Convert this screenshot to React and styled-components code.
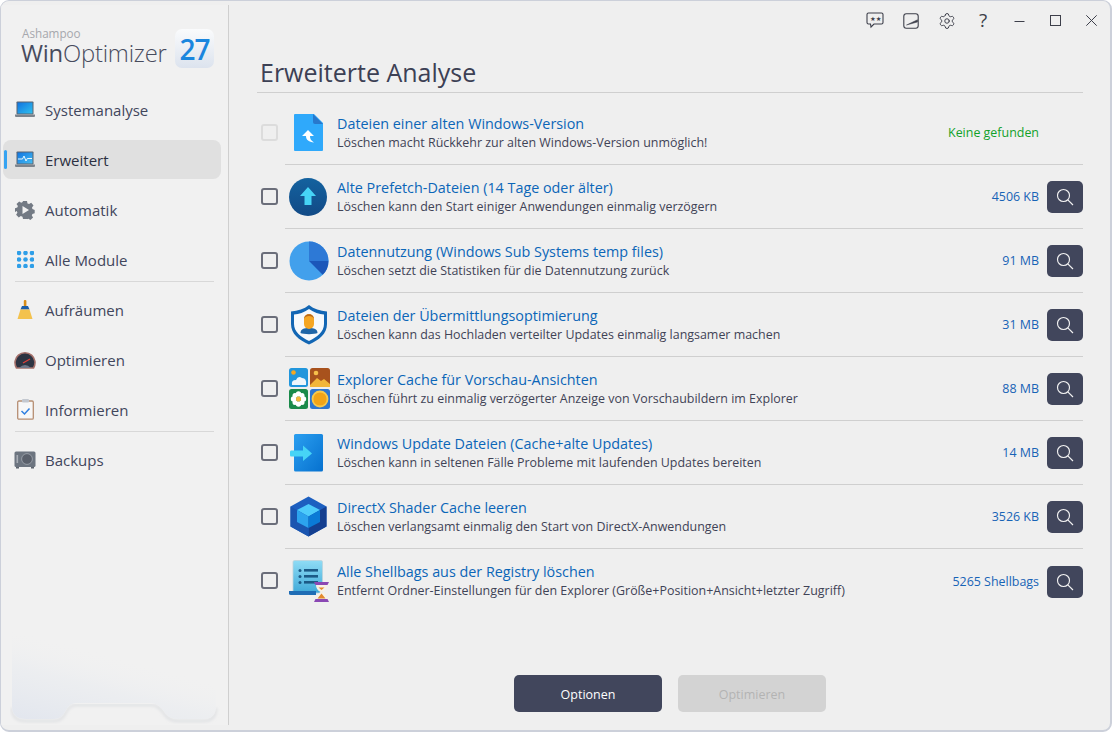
import React from "react";
import styled, { createGlobalStyle } from "styled-components";
import { Settings } from "lucide-react";

const FONT = `"Open Sans", "Noto Sans", "Liberation Sans", sans-serif`;
const DARK = "#41465c";
const BLUE = "#0b66b8";

const Global = createGlobalStyle`
  html, body { margin: 0; padding: 0; background: #ffffff; overflow: hidden; }
  body { font-family: ${FONT}; }
  * { box-sizing: border-box; }
`;

const Window = styled.div`
  width: 1112px; height: 732px; display: flex;
  background: #efefef; border: 1px solid #ccd0da; border-width: 1px 2px 2px 1px; border-radius: 9px;
  overflow: hidden;
`;
const Sidebar = styled.aside`
  width: 228px; flex: none; margin: 4px 0 5px; display: flex; flex-direction: column;
  background: #f1f1f1; border-right: 1px solid #cfcfcf; padding: 0 7px 0 2px;
`;
const Logo = styled.div`
  height: 74px; padding: 21px 0 0 18px; display: flex; align-items: flex-start; gap: 8px; flex: none;
`;
const LogoWords = styled.div`
  display: flex; flex-direction: column; width: 146px;
`;
const LogoVendor = styled.span`
  font-size: 11.7px; line-height: 15px; color: #a6a8ad; font-weight: 400; margin-left: 1px;
`;
const LogoName = styled.span`
  font-size: 23.8px; line-height: 24px; font-weight: 300; color: #474b5d; white-space: nowrap; letter-spacing: -0.2px;
  b { font-weight: 400; color: #474b5d; }
`;
const LogoBadge = styled.div`
  width: 39px; height: 39px; border-radius: 7px; flex: none; display: flex; align-items: center; justify-content: center;
  background: linear-gradient(180deg, #fafbfc 0%, #dce3ee 100%);
  color: #1a86de; font-size: 28px; font-weight: 600; letter-spacing: -1px; margin-top: 3px;
`;
const Nav = styled.nav`
  display: flex; flex-direction: column; padding-top: 11px;
`;
const NavItem = styled.div`
  height: 39px; margin-bottom: 11px; display: flex; align-items: center; border-radius: 8px; padding-left: 11px; gap: 9px;
  position: relative;
  background: ${p => (p.$active ? "#e0e0e0" : "transparent")};
  color: ${p => (p.$active ? "#2c3042" : DARK)};
  font-size: 15px;
`;
const NavMark = styled.span`
  position: absolute; left: 1px; top: 10px; width: 3px; height: 19px; border-radius: 2px; background: #35a3f2;
`;
const NavIcon = styled.span`
  width: 22px; height: 22px; flex: none; display: flex; align-items: center; justify-content: center;
`;
const NavRule = styled.div`
  height: 1px; background: #d8d8d8; margin: -9px 7px 8px 12px;
`;
const Ornament = styled.svg`
  display: block; margin: auto 0 -1px 7px; flex: none;
`;
const Main = styled.main`
  flex: 1; min-width: 0; display: flex; flex-direction: column; padding: 0 27px 0 28px;
`;
const TitleBar = styled.div`
  height: 39px; flex: none; display: flex; align-items: center; justify-content: flex-end; margin-right: -26px;
`;
const TitleButton = styled.span`
  width: 36px; height: 36px; display: flex; align-items: center; justify-content: center; color: #3d3f4a;
  font-size: 19px; line-height: 1;
`;
const Heading = styled.h1`
  margin: 0; height: 53px; padding: 14px 0 0 3px; font-size: 25px; line-height: 36px; font-weight: 400; color: #3c4054;
  border-bottom: 1px solid #cfcfcf; flex: none;
`;
const List = styled.div`
  display: flex; flex-direction: column; flex: none; margin-top: 8px;
`;
const Row = styled.div`
  display: flex; align-items: center; height: 64px;
`;
const Check = styled.span`
  width: 17px; height: 17px; margin: 0 7px 2px 4px; flex: none; border-radius: 3px;
  border: 2px solid ${p => (p.$off ? "#dcdcdc" : "#6b6e7a")};
`;
const RowBody = styled.div`
  flex: 1; min-width: 0; height: 64px; display: flex; align-items: center;
  border-bottom: ${p => (p.$last ? "none" : "1px solid #cfcfcf")};
  padding-left: 4px;
`;
const RowIcon = styled.span`
  width: 48px; flex: none; display: flex; align-items: center;
`;
const RowText = styled.div`
  flex: 1; min-width: 0; display: flex; flex-direction: column; gap: 2px; padding-bottom: 1px;
`;
const RowTitle = styled.div`
  font-size: 14.35px; line-height: 19px; color: ${BLUE}; white-space: nowrap;
`;
const RowSub = styled.div`
  font-size: 12.45px; line-height: 16px; color: #3f4356; white-space: nowrap;
`;
const RowValue = styled.div`
  font-size: 12.45px; white-space: nowrap; margin-right: ${p => (p.$none ? "44px" : "8px")};
  color: ${p => (p.$none ? "#12a12a" : "#1763b6")};
`;
const LensButton = styled.span`
  width: 36px; height: 32px; margin-top: 1px; flex: none; border-radius: 5px; background: ${DARK}; display: flex; align-items: center; justify-content: center; color: #f2f2f2;
`;
const Footer = styled.div`
  margin-top: auto; padding-bottom: 18px; display: flex; justify-content: center; gap: 16px;
`;
const Button = styled.div`
  width: 148px; height: 37px; padding-top: 1px; border-radius: 5px; display: flex; align-items: center; justify-content: center; font-size: 12.5px;
  background: ${p => (p.$off ? "#d3d3d3" : DARK)};
  color: ${p => (p.$off ? "#b3b3b3" : "#ffffff")};
`;

const Lens = () => (
  <svg width="18" height="18" viewBox="0 0 18 18" fill="none" stroke="currentColor" strokeWidth="1.15">
    <circle cx="7.5" cy="7.5" r="6" />
    <path d="M11.8 11.8 L17 17" />
  </svg>
);
const Laptop = ({ pulse }) => (
  <svg width="20" height="17" viewBox="0 0 20 17">
    <defs>
      <linearGradient id={pulse ? "lp2" : "lp1"} x1="0" y1="0" x2="1" y2="1">
        <stop offset="0" stopColor="#1174e0" />
        <stop offset="1" stopColor={pulse ? "#45bdf2" : "#30c0ee"} />
      </linearGradient>
    </defs>
    <rect x="1.5" y="0.5" width="17" height="13" rx="0.8" fill="#5b6470" />
    <rect x="2.5" y="1.5" width="15" height="11" fill={`url(#${pulse ? "lp2" : "lp1"})`} />
    {pulse && <path d="M3 8 H7.5 L9 5 L11 10 L12.3 7.5 H17" fill="none" stroke="#e9f7ff" strokeWidth="1" />}
    <path d="M0 13.5 H20 V15 Q20 16 19 16 H1 Q0 16 0 15Z" fill="#7c848d" />
  </svg>
);
const Gear = () => (
  <svg width="20" height="20" viewBox="0 0 20 20">
    <path fill="#737a84" d="M8 1h4l.5 2.4 1.6.7 2.1-1.3 2.3 2.7-1.5 2 .4 1.5 2.3.9v3.4l-2.3.7-.6 1.6 1.3 2-2.7 2.4-2-1.3-1.6.6L12 19H8l-.5-2.2-1.7-.7-2 1.3-2.7-2.6 1.3-2-.6-1.7L0 12V8.3l2.3-.7.6-1.6-1.4-2 2.7-2.6 2 1.4 1.4-.7z" />
    <path fill="#f1f1f1" d="M7.5 6 L14 10 L7.5 14Z" />
  </svg>
);
const Dots = () => (
  <svg width="17" height="17" viewBox="0 0 17 17" fill="#2f9fe8">
    {[2, 8.5, 15].flatMap(y => [2, 8.5, 15].map(x => <circle key={`${x}-${y}`} cx={x} cy={y} r="2.3" />))}
  </svg>
);
const Broom = () => (
  <svg width="18" height="20" viewBox="0 0 18 20">
    <rect x="7.8" y="0" width="2.6" height="7" rx="1" fill="#d98d16" />
    <path d="M6 6 H12 L13.5 9.5 H4.5Z" fill="#1c5ea8" />
    <path d="M4.5 9.5 H13.5 L16.5 19 H1.5Z" fill="#f3c24e" />
  </svg>
);
const Gauge = () => (
  <svg width="22" height="18" viewBox="0 0 22 18">
    <path d="M2.5 17 A10 10 0 1 1 19.5 17 Z" fill="#2d3442" stroke="#a5706a" strokeWidth="1.6" />
    <path d="M9 12 L16 8" stroke="#e0403a" strokeWidth="1.2" />
    <path d="M5 17 Q11 11 17 17Z" fill="#6e7687" />
  </svg>
);
const Clipboard = () => (
  <svg width="17" height="21" viewBox="0 0 17 21">
    <rect x="0.7" y="2" width="15.6" height="18.2" rx="1.2" fill="#f7f7f7" stroke="#b68e72" strokeWidth="1.3" />
    <rect x="5" y="0" width="7" height="3.5" rx="1" fill="#c3c8d0" />
    <path d="M4.5 12 L7.5 15 L12.5 9.5" fill="none" stroke="#2f7fe0" strokeWidth="1.5" />
  </svg>
);
const Safe = () => (
  <svg width="22" height="18" viewBox="0 0 22 18">
    <rect x="0.5" y="0.5" width="21" height="15.5" rx="1.5" fill="#6d7580" />
    <rect x="2" y="16" width="3" height="1.5" fill="#5d646e" /><rect x="17" y="16" width="3" height="1.5" fill="#5d646e" />
    <circle cx="13" cy="8" r="5.4" fill="#5a606b" stroke="#979da6" strokeWidth="1" />
    <rect x="2.5" y="4" width="1.6" height="8" fill="#a9aeb6" />
  </svg>
);

const FileBack = () => (
  <svg width="40" height="40" viewBox="0 0 40 40">
    <path d="M5 2 Q5 1 6 1 H25 L34 10 V37 Q34 38 33 38 H6 Q5 38 5 37Z" fill="#2fa9fb" />
    <path d="M24 1 L34 11 H26 Q24 11 24 9Z" fill="#2878cc" />
    <path d="M19 17 L13 23 H17 C17 27 20 29 25 29.5 C22 27.5 21 26 21 23 H25Z" fill="#ffffff" />
  </svg>
);
const Prefetch = () => (
  <svg width="40" height="40" viewBox="0 0 40 40">
    <defs><linearGradient id="pf" x1="0" y1="0" x2="0" y2="1"><stop offset="0" stopColor="#14629f" /><stop offset="1" stopColor="#124a86" /></linearGradient></defs>
    <circle cx="19" cy="20" r="19" fill="url(#pf)" />
    <path d="M19 10 L27 19 H22.5 V28 H15.5 V19 H11Z" fill="#46d4f6" />
  </svg>
);
const Pie = () => (
  <svg width="40" height="40" viewBox="0 0 40 40">
    <circle cx="20" cy="20" r="19.5" fill="#42a0ec" />
    <path d="M20 20 V0.5 A19.5 19.5 0 0 1 39.5 20Z" fill="#2d79d6" />
    <path d="M20 20 H39.5 A19.5 19.5 0 0 1 33.7 33.8Z" fill="#1b57b9" />
  </svg>
);
const Shield = () => (
  <svg width="40" height="41" viewBox="0 0 40 41">
    <path d="M20 1 C25 5 31 7 38 7.5 V20 C38 30 30 36 20 40.5 C10 36 2 30 2 20 V7.5 C9 7 15 5 20 1Z" fill="#1266b4" />
    <path d="M20 5 C25 8.5 30 10 35 10.5 V20 C35 28 28 33 20 37 C12 33 5 28 5 20 V10.5 C10 10 15 8.5 20 5Z" fill="#f6f9fc" />
    <path d="M11.5 29 C11.5 25 15 24 20 24 C25 24 28.5 25 28.5 29 C26 30.5 14 30.5 11.5 29Z" fill="#1f66a8" />
    <rect x="15" y="10" width="10" height="15" rx="5" fill="#f5a623" />
    <path d="M15 15 C16 11 24 11 25 15 C25 8.5 15 8.5 15 15Z" fill="#b9681a" />
  </svg>
);
const Tiles = () => (
  <svg width="41" height="41" viewBox="0 0 41 41">
    <rect x="0" y="0" width="19" height="19" rx="2.5" fill="#2196dc" />
    <circle cx="4.5" cy="4.5" r="2.3" fill="#f6a81f" />
    <path d="M3 17 Q2 12 7 12 Q9 7 13 10 Q18 10 17 17Z" fill="#eef6fb" />
    <rect x="21" y="0" width="20" height="19" rx="2.5" fill="#a8521d" />
    <circle cx="27" cy="5" r="2.3" fill="#f6c04b" />
    <path d="M21 17 L28 10 L32 13 L35 11 L41 16 V19 H21Z" fill="#f3b63a" />
    <rect x="0" y="21" width="19" height="20" rx="2.5" fill="#1a8a4a" />
    <g fill="#ffffff"><circle cx="9.5" cy="26" r="2.7" /><circle cx="9.5" cy="36" r="2.7" /><circle cx="4.5" cy="31" r="2.7" /><circle cx="14.5" cy="31" r="2.7" /><circle cx="6" cy="27.5" r="2.5" /><circle cx="13" cy="27.5" r="2.5" /><circle cx="6" cy="34.5" r="2.5" /><circle cx="13" cy="34.5" r="2.5" /></g>
    <circle cx="9.5" cy="31" r="2.5" fill="#f3b63a" />
    <rect x="21" y="21" width="20" height="20" rx="2.5" fill="#2e76cf" />
    <circle cx="31" cy="31" r="7.5" fill="#f2a418" stroke="#f7c94d" strokeWidth="1.8" />
  </svg>
);
const Update = () => (
  <svg width="41" height="40" viewBox="0 0 41 40">
    <defs><linearGradient id="up" x1="0" y1="0" x2="1" y2="1"><stop offset="0" stopColor="#2b9ff0" /><stop offset="1" stopColor="#0671cf" /></linearGradient></defs>
    <rect x="5" y="1" width="29" height="37.5" rx="1.5" fill="url(#up)" />
    <path d="M2 17.5 H14 V12.5 L23 20.5 L14 28 V23.5 H2 Q1 23.5 1 22 V19 Q1 17.5 2 17.5Z" fill="#46d4f6" />
  </svg>
);
const Cube = () => (
  <svg width="40" height="41" viewBox="0 0 40 41">
    <path d="M19.5 0.5 L37.5 10.5 V30.5 L19.5 40.5 L1.5 30.5 V10.5Z" fill="#1c5fc0" />
    <path d="M37.5 10.5 V30.5 L19.5 40.5 V20.5Z" fill="#143f90" />
    <path d="M1.5 10.5 L19.5 20.5 V40.5 L1.5 30.5Z" fill="#1a55b0" />
    <path d="M19.5 8 L31 14 L19.5 20.5 L8 14Z" fill="#4dcbfb" />
    <path d="M8 14 L19.5 20.5 V32 L8 26Z" fill="#2ca3ee" />
    <path d="M31 14 V26 L19.5 32 V20.5Z" fill="#0a7ad6" />
  </svg>
);
const Shell = () => (
  <svg width="42" height="43" viewBox="0 0 42 43">
    <defs><linearGradient id="sb" x1="0" y1="0" x2="0" y2="1"><stop offset="0" stopColor="#8fdcf5" /><stop offset="1" stopColor="#3fa9d8" /></linearGradient></defs>
    <path d="M4 2 Q4 0.5 5.5 0.5 H32 Q33.5 0.5 33.5 2 V33 H4Z" fill="url(#sb)" stroke="#bcd3dc" strokeWidth="0.8" />
    <path d="M0 31 H27 V35 H2 Q0 35 0 33.5Z" fill="#1f6db5" />
    <g fill="#1c5a86">
      <circle cx="11" cy="10.5" r="1.5" /><rect x="15" y="9" width="14" height="2.6" />
      <circle cx="11" cy="16.5" r="1.5" /><rect x="15" y="15" width="14" height="2.6" />
      <circle cx="11" cy="22.5" r="1.5" /><rect x="15" y="21" width="14" height="2.6" />
    </g>
    <path d="M25 22 H40 L38.5 25 H26.5Z" fill="#8a48b4" />
    <path d="M25 42 H40 L38.5 39 H26.5Z" fill="#8a48b4" />
    <path d="M27 25 H38 Q38 29.5 33.5 32 Q38 34.5 38 39 H27 Q27 34.5 31.5 32 Q27 29.5 27 25Z" fill="#f7f1e6" />
    <path d="M28.5 38.5 L32.5 33.5 L36.5 38.5Z M29.5 27.5 H35.5 L32.5 30Z" fill="#e38a2e" />
  </svg>
);

const Feedback = () => (
  <svg width="18" height="17" viewBox="0 0 18 17" fill="none">
    <path d="M2.5 1 H15.5 Q17 1 17 2.5 V10.5 Q17 12 15.5 12 H8 L5 15 L4.5 12 H2.5 Q1 12 1 10.5 V2.5 Q1 1 2.5 1Z" stroke="#3d3f4a" strokeWidth="1.1" />
    <text x="4" y="9.4" fontFamily="'DejaVu Sans',sans-serif" fontSize="6.4" fill="#3d3f4a">★★</text>
  </svg>
);
const Contrast = () => (
  <svg width="16" height="16" viewBox="0 0 16 16" fill="none">
    <rect x="0.8" y="0.8" width="14.4" height="14.4" rx="2.5" stroke="#3d3f4a" strokeWidth="1.1" />
    <path d="M3.5 12 L14.5 6.8 V9 L3.5 12Z" fill="#3d3f4a" stroke="#3d3f4a" strokeWidth="0.5" />
  </svg>
);
const Dash = () => <svg width="11" height="11" viewBox="0 0 11 11"><path d="M0.5 6.5 H10.5" stroke="#3d3f4a" strokeWidth="1" /></svg>;
const Box = () => <svg width="11" height="11" viewBox="0 0 11 11"><rect x="0.5" y="0.5" width="10" height="10" fill="none" stroke="#3d3f4a" strokeWidth="1" /></svg>;
const Cross = () => <svg width="11" height="11" viewBox="0 0 11 11"><path d="M0.3 0.3 L10.7 10.7 M10.7 0.3 L0.3 10.7" stroke="#3d3f4a" strokeWidth="1" /></svg>;

const navGroups = [
  [["Systemanalyse", <Laptop />], ["Erweitert", <Laptop pulse />, true], ["Automatik", <Gear />], ["Alle Module", <Dots />]],
  [["Aufräumen", <Broom />], ["Optimieren", <Gauge />], ["Informieren", <Clipboard />]],
  [["Backups", <Safe />]],
];

const rows = [
  { icon: <FileBack />, title: "Dateien einer alten Windows-Version", sub: "Löschen macht Rückkehr zur alten Windows-Version unmöglich!", value: "Keine gefunden", none: true },
  { icon: <Prefetch />, title: "Alte Prefetch-Dateien (14 Tage oder älter)", sub: "Löschen kann den Start einiger Anwendungen einmalig verzögern", value: "4506 KB" },
  { icon: <Pie />, title: "Datennutzung (Windows Sub Systems temp files)", sub: "Löschen setzt die Statistiken für die Datennutzung zurück", value: "91 MB" },
  { icon: <Shield />, title: "Dateien der Übermittlungsoptimierung", sub: "Löschen kann das Hochladen verteilter Updates einmalig langsamer machen", value: "31 MB" },
  { icon: <Tiles />, title: "Explorer Cache für Vorschau-Ansichten", sub: "Löschen führt zu einmalig verzögerter Anzeige von Vorschaubildern im Explorer", value: "88 MB" },
  { icon: <Update />, title: "Windows Update Dateien (Cache+alte Updates)", sub: "Löschen kann in seltenen Fälle Probleme mit laufenden Updates bereiten", value: "14 MB" },
  { icon: <Cube />, title: "DirectX Shader Cache leeren", sub: "Löschen verlangsamt einmalig den Start von DirectX-Anwendungen", value: "3526 KB" },
  { icon: <Shell />, title: "Alle Shellbags aus der Registry löschen", sub: "Entfernt Ordner-Einstellungen für den Explorer (Größe+Position+Ansicht+letzter Zugriff)", value: "5265 Shellbags" },
];

const ORN_EDGE = "M204 76 Q204 89 191 89 H166 Q158 89 153 83 Q147 73 139 73 H64 Q58 73 54 80 Q50 89 42 89 H14 Q0 89 0 76";

export default function App() {
  return (
    <>
      <Global />
      <Window>
        <Sidebar>
          <Logo>
            <LogoWords>
              <LogoVendor>Ashampoo</LogoVendor>
              <LogoName><b>Win</b>Optimizer</LogoName>
            </LogoWords>
            <LogoBadge>27</LogoBadge>
          </Logo>
          <Nav>
            {navGroups.map((group, g) => (
              <React.Fragment key={g}>
                {g > 0 && <NavRule />}
                {group.map(([label, icon, active]) => (
                  <NavItem key={label} $active={active}>
                    {active && <NavMark />}
                    <NavIcon>{icon}</NavIcon>
                    {label}
                  </NavItem>
                ))}
              </React.Fragment>
            ))}
          </Nav>
          <Ornament width="212" height="96" viewBox="-2 0 212 96">
            <defs>
              <linearGradient id="orn" x1="0" y1="1" x2="0.6" y2="0">
                <stop offset="0" stopColor="#e2e6ee" stopOpacity="1" />
                <stop offset="0.45" stopColor="#ebedf0" stopOpacity="0.8" />
                <stop offset="0.75" stopColor="#f1f1f1" stopOpacity="0" />
              </linearGradient>
              <filter id="ornBlur" x="-5%" y="-5%" width="110%" height="120%">
                <feGaussianBlur stdDeviation="1.6" />
              </filter>
            </defs>
            <path d={ORN_EDGE} fill="none" stroke="#c9ccd2" strokeOpacity="0.55" strokeWidth="2" transform="translate(0 2)" filter="url(#ornBlur)" />
            <path d={`M0 0 H204 V76 ${ORN_EDGE.slice(ORN_EDGE.indexOf("Q"))} Z`} fill="#f1f1f1" />
            <path d={`M0 0 H204 V76 ${ORN_EDGE.slice(ORN_EDGE.indexOf("Q"))} Z`} fill="url(#orn)" />
          </Ornament>
        </Sidebar>
        <Main>
          <TitleBar>
            <TitleButton><Feedback /></TitleButton>
            <TitleButton><Contrast /></TitleButton>
            <TitleButton><Settings size={18} strokeWidth={1.3} /></TitleButton>
            <TitleButton>?</TitleButton>
            <TitleButton><Dash /></TitleButton>
            <TitleButton><Box /></TitleButton>
            <TitleButton><Cross /></TitleButton>
          </TitleBar>
          <Heading>Erweiterte Analyse</Heading>
          <List>
            {rows.map((r, i) => (
              <Row key={r.title}>
                <Check $off={r.none} />
                <RowBody $last={i === rows.length - 1}>
                  <RowIcon>{r.icon}</RowIcon>
                  <RowText>
                    <RowTitle>{r.title}</RowTitle>
                    <RowSub>{r.sub}</RowSub>
                  </RowText>
                  <RowValue $none={r.none}>{r.value}</RowValue>
                  {!r.none && <LensButton><Lens /></LensButton>}
                </RowBody>
              </Row>
            ))}
          </List>
          <Footer>
            <Button>Optionen</Button>
            <Button $off>Optimieren</Button>
          </Footer>
        </Main>
      </Window>
    </>
  );
}
